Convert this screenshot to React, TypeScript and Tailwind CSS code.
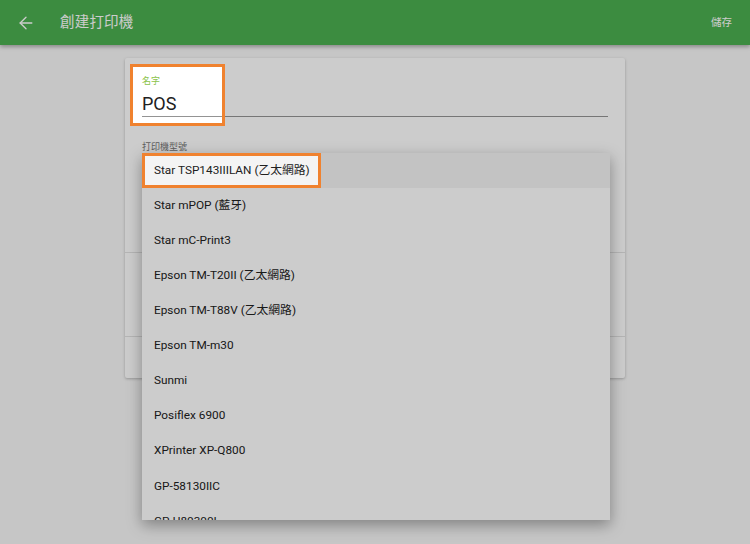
import { ArrowLeft } from "lucide-react";

const printers = [
  "Star TSP143IIILAN (乙太網路)",
  "Star mPOP (藍牙)",
  "Star mC-Print3",
  "Epson TM-T20II (乙太網路)",
  "Epson TM-T88V (乙太網路)",
  "Epson TM-m30",
  "Sunmi",
  "Posiflex 6900",
  "XPrinter XP-Q800",
  "GP-58130IIC",
  "GP-U80300I",
];

export default function App() {
  return (
    <div className="relative h-[544px] w-[750px] overflow-hidden bg-[#f8f8f8] font-['Roboto','Noto_Sans_CJK_TC',sans-serif]">
      {/* app bar */}
      <header className="relative z-10 flex h-[45px] items-center bg-[#4caf50] text-white shadow-[0_2px_4px_rgba(0,0,0,0.3)]">
        <ArrowLeft size={20} strokeWidth={1.6} className="ml-[16px]" />
        <h1 className="ml-[24px] text-[14.5px] tracking-[0.2px]">創建打印機</h1>
        <button className="ml-auto mr-[18px] text-[10.5px]">儲存</button>
      </header>

      {/* form card */}
      <div className="relative mx-auto mt-[13px] h-[320px] w-[500px] rounded-[2px] bg-white shadow-[0_1px_3px_rgba(0,0,0,0.25)]">
        <div className="h-[195px] border-b border-[#e2e2e2] px-[17px] pt-[17px]">
          <div className="text-[9px] leading-[12px] text-[#8bc34a]">名字</div>
          <div className="mt-[5px] border-b border-[#949494] text-[18px] leading-[24px] text-[#212121]">POS</div>
          <div className="mt-[24px] text-[9px] leading-[12px] text-[#757575]">打印機型號</div>
          <div className="mt-[1px] h-[34px] border-b border-[#949494]" />
        </div>
        <div className="h-[84px] border-b border-[#e2e2e2]" />
        <div className="h-[40px]" />

        {/* open select menu */}
        <ul className="absolute left-[17px] top-[95px] h-[367px] w-[468px] overflow-hidden bg-white shadow-[0_5px_14px_rgba(0,0,0,0.35)]">
          {printers.map((p, i) => (
            <li
              key={p}
              className={`flex h-[35.1px] items-center px-[12px] text-[11.8px] text-[#212121] ${i === 0 ? "bg-[#f4f4f4]" : ""}`}
            >
              {p}
            </li>
          ))}
        </ul>
      </div>

      {/* tutorial dim overlay with spotlight holes */}
      <svg className="pointer-events-none absolute left-0 top-0 z-20" width="750" height="544">
        <path
          fillRule="evenodd"
          fill="rgba(0,0,0,0.2)"
          d="M0 0H750V544H0Z M130 64H225V126H130Z M142 153H321V188H142Z"
        />
      </svg>
      <div className="pointer-events-none absolute left-[130px] top-[64px] z-30 h-[62px] w-[95px] border-[3px] border-[#f0822f]" />
      <div className="pointer-events-none absolute left-[142px] top-[153px] z-30 h-[35px] w-[179px] border-[3px] border-[#f0822f]" />
    </div>
  );
}
